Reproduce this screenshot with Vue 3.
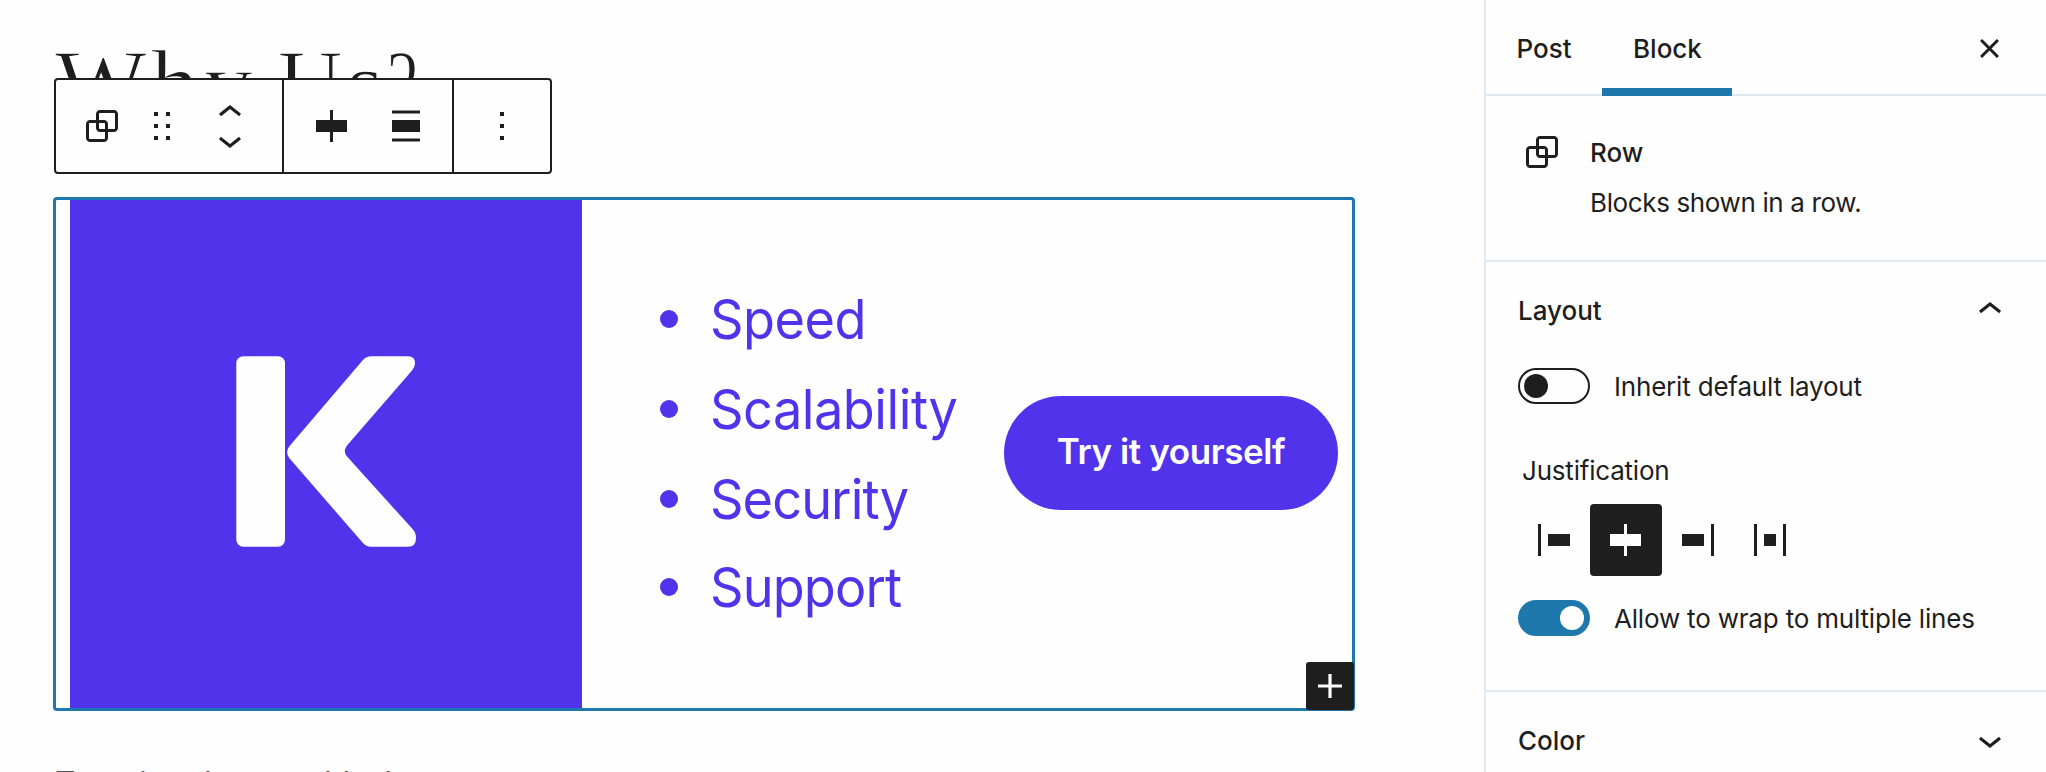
<script setup>
const features = [
  { label: 'Speed', cls: 'f-speed' },
  { label: 'Scalability', cls: 'f-scalability' },
  { label: 'Security', cls: 'f-security' },
  { label: 'Support', cls: 'f-support' },
]

const icons = {
  row: 'M18 4h-7c-1.1 0-2 .9-2 2v3H6c-1.1 0-2 .9-2 2v7c0 1.1.9 2 2 2h7c1.1 0 2-.9 2-2v-3h3c1.1 0 2-.9 2-2V6c0-1.1-.9-2-2-2zm-4.5 14c0 .3-.2.5-.5.5H6c-.3 0-.5-.2-.5-.5v-7c0-.3.2-.5.5-.5h3V13c0 1.1.9 2 2 2h2.5v3zm0-4.5H11c-.3 0-.5-.2-.5-.5v-2.5H13c.3 0 .5.2.5.5v2.5zm5-.5c0 .3-.2.5-.5.5h-3V11c0-1.1-.9-2-2-2h-2.5V6c0-.3.2-.5.5-.5h7c.3 0 .5.2.5.5v7z',
  drag: 'M8 7h2V5H8v2zm6-2v2h2V5h-2zm-6 8h2v-2H8v2zm6 0h2v-2h-2v2zm-6 6h2v-2H8v2zm6 0h2v-2h-2v2z',
  up: 'M6.5 12.4L12 8l5.5 4.4-.9 1.2L12 10l-4.5 3.6-1-1.2z',
  down: 'M17.5 11.6L12 16l-5.5-4.4.9-1.2L12 14l4.5-3.6 1 1.2z',
  center: 'M12.5 15v5H11v-5H4V9h7V4h1.5v5h7v6h-7z',
  align: 'M5 15h14V9H5v6zm0 4.8h14v-1.5H5v1.5zM5 4.2v1.5h14V4.2H5z',
  more: 'M13 19h-2v-2h2v2zm0-6h-2v-2h2v2zm0-6h-2V5h2v2z',
  plus: 'M18 11.2h-5.2V6h-1.6v5.2H6v1.6h5.2V18h1.6v-5.2H18z',
  left: 'M9 9v6h11V9H9zM4 20h1.5V4H4v16z',
  right: 'M4 15h11V9H4v6zM18.5 4v16H20V4h-1.5z',
  between: 'M9 15h6V9H9v6zm-5 5h1.5V4H4v16zM18.5 4v16H20V4h-1.5z',
}

const justifications = [
  { name: 'left', active: false },
  { name: 'center', active: true },
  { name: 'right', active: false },
  { name: 'between', active: false },
]
</script>

<template>
  <div class="editor">
    <main class="canvas">
      <h1 class="title"><span class="k1">W</span><span class="k2">h</span>y <span class="k3">U</span>s<span class="k4">?</span></h1>

      <div class="toolbar">
        <div class="group g1">
          <svg class="icon" viewBox="0 0 24 24"><path :d="icons.row" /></svg>
          <svg class="icon drag" viewBox="0 0 24 24"><path :d="icons.drag" /></svg>
          <div class="movers">
            <svg class="icon" viewBox="0 0 24 24"><path :d="icons.up" /></svg>
            <svg class="icon" viewBox="0 0 24 24"><path :d="icons.down" /></svg>
          </div>
        </div>
        <div class="group g2">
          <svg class="icon" viewBox="0 0 24 24"><path :d="icons.center" /></svg>
          <svg class="icon" viewBox="0 0 24 24"><path :d="icons.align" /></svg>
        </div>
        <div class="group g3">
          <svg class="icon" viewBox="0 0 24 24"><path :d="icons.more" /></svg>
        </div>
      </div>

      <section class="row-block">
        <div class="picture">
          <svg class="logo" viewBox="0 0 512 508">
            <rect x="166.300" y="156.300" width="48.700" height="190.400" rx="7" />
            <path d="M219.200 246.500L292.500 160.500Q296.500 156.300 301 156.300H338Q345 156.300 345 163Q345 167 342 170.500L277 245.500Q272.500 251 277 256.500L343 329.500Q346 333 346 338Q346 346.700 338 346.700H301Q296 346.700 292.500 342.500L219.200 258Q215 252 219.200 246.500Z" />
          </svg>
        </div>
        <ul class="features">
          <li v-for="f in features" :key="f.label"><span :class="f.cls">{{ f.label }}</span></li>
        </ul>
        <button class="cta"><span>Try it yourself</span></button>
        <button class="adder">
          <svg class="icon" viewBox="0 0 24 24"><path :d="icons.plus" /></svg>
        </button>
      </section>

      <p class="placeholder">Type / to choose a block</p>
    </main>

    <aside class="sidebar">
      <header class="tabs">
        <span class="tab post">Post</span>
        <span class="tab block">Block</span>
        <svg class="close" viewBox="0 0 18 18"><path d="M1 1L17 17M17 1L1 17" /></svg>
      </header>

      <section class="card">
        <svg class="icon" viewBox="0 0 24 24"><path :d="icons.row" /></svg>
        <div class="card-text">
          <strong>Row</strong>
          <span class="desc">Blocks shown in a row.</span>
        </div>
      </section>

      <section class="panel">
        <div class="panel-head">
          <strong>Layout</strong>
          <svg class="icon" viewBox="0 0 24 24"><path :d="icons.up" /></svg>
        </div>
        <div class="toggle-row">
          <span class="toggle"><i /></span>
          <span class="label">Inherit default layout</span>
        </div>
        <div class="legend">Justification</div>
        <div class="justify">
          <span v-for="j in justifications" :key="j.name" :class="['jbtn', { active: j.active }]">
            <svg class="icon" viewBox="0 0 24 24"><path :d="icons[j.name]" /></svg>
          </span>
        </div>
        <div class="toggle-row wrap">
          <span class="toggle on"><i /></span>
          <span class="label">Allow to wrap to multiple lines</span>
        </div>
      </section>

      <section class="panel last">
        <div class="panel-head">
          <strong>Color</strong>
          <svg class="icon" viewBox="0 0 24 24"><path :d="icons.down" /></svg>
        </div>
      </section>
    </aside>
  </div>
</template>

<style>
body {
  margin: 0;
  overflow: hidden;
}
</style>

<style scoped>
.editor {
  display: flex;
  width: 2046px;
  height: 772px;
  overflow: hidden;
  background: #fefefe;
  color: #1e1e1e;
  font-family: Inter, "Liberation Sans", sans-serif;
  font-size: 26px;
  line-height: 32px;
}
.icon {
  display: block;
  flex: none;
  width: 48px;
  height: 48px;
  fill: currentColor;
}
button {
  border: 0;
  padding: 0;
  font: inherit;
}

/* Canvas */
.canvas {
  position: relative;
  box-sizing: border-box;
  width: 1484px;
  height: 772px;
  padding: 29px 0 0 53px;
  overflow: hidden;
}
.title {
  margin: 0;
  height: 168px;
  padding-left: 2px;
  font-family: "Liberation Serif", serif;
  font-weight: 400;
  font-size: 97px;
  line-height: 112px;
  -webkit-text-stroke: 1.3px #fefefe;
  white-space: nowrap;
}
.k1 {
  letter-spacing: 4px;
}
.k2 {
  letter-spacing: 5px;
}
.k3,
.k4 {
  display: inline-block;
  transform-origin: left;
}
.k3 {
  margin: 0 -2px 0 1px;
  transform: scaleX(0.92);
}
.k4 {
  margin-left: 3px;
  transform: scaleX(0.72);
}
.toolbar {
  position: absolute;
  left: 54px;
  top: 78px;
  box-sizing: border-box;
  display: flex;
  width: 498px;
  height: 96px;
  border: 2px solid #1e1e1e;
  border-radius: 4px;
  background: #fefefe;
}
.group {
  box-sizing: border-box;
  display: flex;
  align-items: center;
  height: 92px;
}
.g1 {
  width: 228px;
  padding-left: 22px;
  border-right: 2px solid #1e1e1e;
}
.drag {
  margin-left: 12px;
}
.movers {
  margin-left: 20px;
}
.movers .icon:first-child {
  margin-bottom: -21px;
}
.g2 {
  width: 170px;
  padding-left: 24px;
  gap: 26px;
  border-right: 2px solid #1e1e1e;
}
.g3 {
  padding-left: 24px;
}
.row-block {
  position: relative;
  box-sizing: border-box;
  display: flex;
  align-items: center;
  width: 1302px;
  height: 514px;
  padding-left: 14px;
  border: 3px solid #1f78ad;
  border-radius: 4px;
}
.picture {
  width: 512px;
  height: 508px;
  background: #5033ea;
}
.logo {
  display: block;
  width: 512px;
  height: 508px;
  fill: #fefefe;
}
.features {
  box-sizing: border-box;
  width: 422px;
  margin: -3px 0 0;
  padding: 0 0 0 78px;
  list-style: none;
  color: #5033ea;
  font-size: 55px;
  line-height: 90px;
}
.features li {
  display: flex;
  align-items: center;
  height: 90px;
  white-space: nowrap;
}
.features li:last-child {
  margin-top: -2px;
}
.features li::before {
  content: "";
  width: 18px;
  height: 18px;
  margin-right: 32px;
  border-radius: 50%;
  background: currentColor;
}
.features span {
  transform: scaleX(0.95);
  transform-origin: left;
}
.f-speed {
  letter-spacing: -0.5px;
}
.f-scalability {
  letter-spacing: -0.5px;
}
.f-security {
  letter-spacing: -0.95px;
}
.f-support {
  letter-spacing: -0.9px;
}
.cta {
  box-sizing: border-box;
  width: 334px;
  height: 114px;
  margin-top: -2px;
  padding-bottom: 4px;
  border-radius: 57px;
  background: #5033ea;
  color: #fefefe;
  font-size: 35px;
  font-weight: 600;
  line-height: 44px;
  letter-spacing: -0.4px;
  white-space: nowrap;
}
.adder {
  position: absolute;
  right: -2px;
  bottom: -2px;
  width: 48px;
  height: 48px;
  border-radius: 3px;
  background: #1e1e1e;
  color: #fefefe;
}
.placeholder {
  margin: 53px 0 0 2px;
  color: #555;
  font-size: 32px;
  line-height: 40px;
  letter-spacing: -1.1px;
  white-space: nowrap;
}

/* Sidebar */
.sidebar {
  box-sizing: border-box;
  width: 562px;
  height: 772px;
  border-left: 2px solid #dfe9f2;
  white-space: nowrap;
}
strong {
  font-weight: 500;
}
.tabs {
  box-sizing: border-box;
  display: flex;
  align-items: center;
  height: 96px;
  border-bottom: 2px solid #dfe9f2;
}
.tab {
  box-sizing: border-box;
  height: 96px;
  margin-top: 2px;
  line-height: 97px;
  font-weight: 500;
}
.post {
  width: 116px;
  padding-left: 30.5px;
}
.block {
  width: 130px;
  padding-left: 31px;
  border-bottom: 8px solid #1f78ad;
}
.close {
  width: 19px;
  height: 19px;
  margin: 2px 0 0 248px;
  fill: none;
  stroke: #1e1e1e;
  stroke-width: 2.8;
}
.card {
  box-sizing: border-box;
  display: flex;
  height: 166px;
  padding: 32px 0 0 32px;
  border-bottom: 2px solid #dfe9f2;
}
.card-text {
  display: flex;
  flex-direction: column;
  gap: 18px;
  padding: 9px 0 0 24px;
}
.desc {
  letter-spacing: -0.37px;
}
.panel {
  box-sizing: border-box;
  height: 430px;
  padding-left: 32px;
  border-bottom: 2px solid #dfe9f2;
}
.last {
  border: 0;
}
.panel-head {
  display: flex;
  align-items: center;
  justify-content: space-between;
  height: 98px;
  padding-right: 32px;
}
.panel-head .icon {
  margin-top: -3px;
}
.toggle-row {
  display: flex;
  align-items: center;
  height: 36px;
  margin-top: 8px;
  gap: 24px;
}
.label {
  padding-top: 2px;
  letter-spacing: -0.19px;
}
.toggle {
  box-sizing: border-box;
  display: flex;
  align-items: center;
  width: 72px;
  height: 36px;
  padding-left: 4px;
  border: 2px solid #1e1e1e;
  border-radius: 18px;
}
.toggle i {
  width: 24px;
  height: 24px;
  border-radius: 50%;
  background: #1e1e1e;
}
.toggle.on {
  padding-left: 40px;
  border-color: #1f78ad;
  background: #1f78ad;
}
.toggle.on i {
  background: #fefefe;
}
.legend {
  height: 32px;
  margin: 51px 0 17px 4px;
  letter-spacing: -0.2px;
}
.justify {
  display: flex;
}
.jbtn {
  display: flex;
  align-items: center;
  justify-content: center;
  width: 72px;
  height: 72px;
  border-radius: 4px;
}
.jbtn.active {
  background: #1e1e1e;
  color: #fefefe;
}
.toggle-row.wrap {
  margin-top: 24px;
}
</style>
